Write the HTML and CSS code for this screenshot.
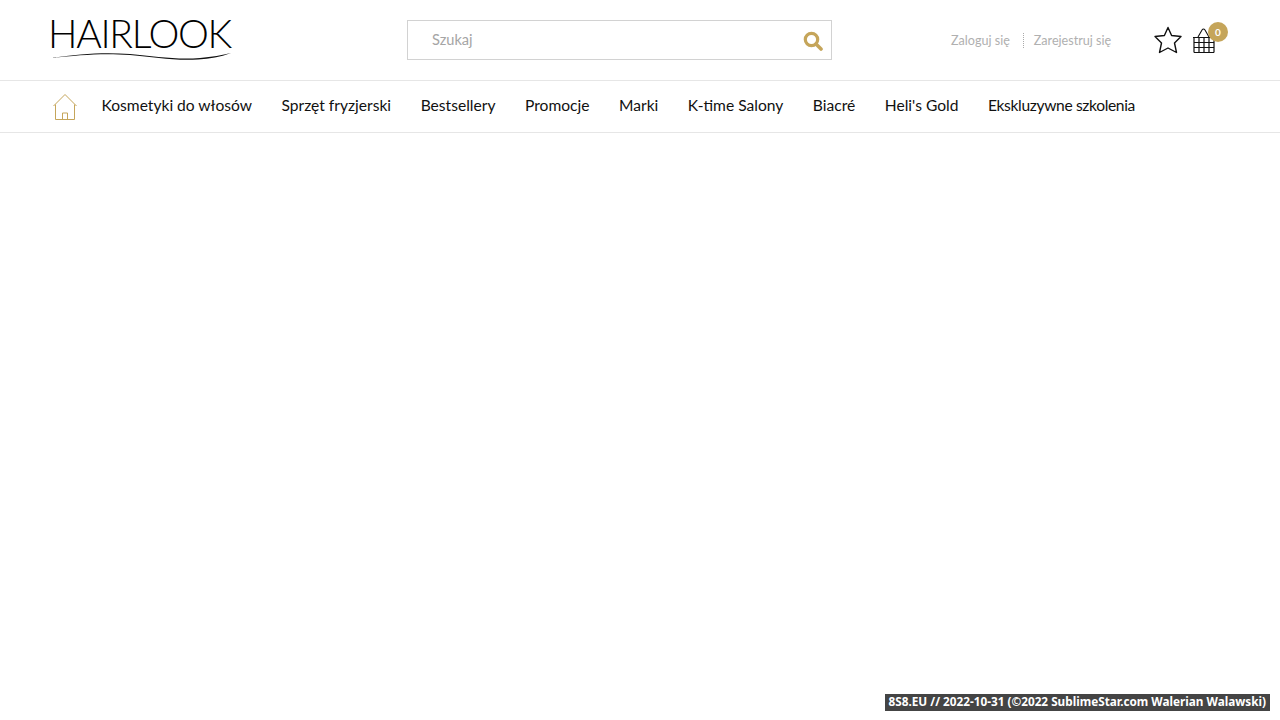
FILE: index.html
```html
<!DOCTYPE html>
<html lang="pl">
<head>
    <meta charset="UTF-8">
    <title>Hairlook</title>
    <link rel="stylesheet" href="styles.css">
</head>
<body>

    <header class="top">
        <a class="logo" href="#">
            <span class="logo-text">HAIRLOOK</span>
            <svg class="logo-wave" width="182" height="10" viewBox="0 0 182 10">
                <path d="M1 7 C30 3 52 1 80 3 C105 5 125 9 150 7 C162 6 172 4 181 2 C170 6 160 8 148 8.500 C124 10 104 6 80 4 C52 2 30 4 1 7 Z" fill="#111"/>
            </svg>
        </a>
        <form class="search">
            <input class="search-input" type="text" placeholder="Szukaj">
            <svg class="search-icon" width="20" height="20" viewBox="0 0 20 20">
                <circle cx="8.500" cy="8.500" r="6.200" fill="none" stroke="#c5a55a" stroke-width="3.200"/>
                <path d="M13 13 L18 18" stroke="#c5a55a" stroke-width="3.600" stroke-linecap="round"/>
            </svg>
        </form>
        <div class="account">
            <a href="#">Zaloguj się</a>
            <a class="register" href="#">Zarejestruj się</a>
        </div>
        <div class="shop-icons">
            <svg class="star" width="28" height="28" viewBox="0 0 28 28">
                <path d="M14 1.500 L17.600 9.500 L27 10.500 L20.500 17 L22.500 26.500 L14 22 L5.500 26.500 L7.500 17 L1 10.500 L10.400 9.500 Z" fill="none" stroke="#111" stroke-width="1.400" stroke-linejoin="round"/>
            </svg>
            <div class="basket">
                <svg width="24" height="26" viewBox="0 0 24 26">
                    <path d="M6 10 L10 3 Q11.500 1 13 3 L17 10" fill="none" stroke="#111" stroke-width="1.100"/>
                    <path d="M1 10.500 H23 M2 15.500 H22 M2 20.500 H22 M2 25.500 H22 M2 10.500 V25.500 M22 25.500 V10.500 M7 10.500 V25.500 M12 10.500 V25.500 M17 10.500 V25.500" fill="none" stroke="#111" stroke-width="1.200"/>
                </svg>
                <span class="badge">0</span>
            </div>
        </div>
    </header>

    <nav class="menu">
        <a class="home" href="#">
            <svg width="26" height="28" viewBox="0 0 26 28">
                <path d="M1.500 13 L13 1.500 L24.500 13 M3.500 11.500 V26.500 H22.500 V11.500 M10.500 26.500 V20 H15.500 V26.500" fill="none" stroke="#c5a55a" stroke-width="1"/>
            </svg>
        </a>
        <a href="#">Kosmetyki do włosów</a>
        <a href="#">Sprzęt fryzjerski</a>
        <a href="#">Bestsellery</a>
        <a href="#">Promocje</a>
        <a href="#">Marki</a>
        <a href="#">K-time Salony</a>
        <a href="#">Biacré</a>
        <a href="#">Heli's Gold</a>
        <a class="tight" href="#">Ekskluzywne szkolenia</a>
    </nav>

    <div class="stamp">8S8.EU // 2022-10-31 (©2022 SublimeStar.com Walerian Walawski)</div>

</body>
</html>
```
FILE: styles.css
```css
body {
    font-family: 'Lato', 'Noto Sans', sans-serif;
    background-color: #fff;
    color: #111;
    margin: 0;
    height: 720px;
    overflow: hidden;
}

a {
    color: inherit;
    text-decoration: none;
}

.top {
    display: flex;
    align-items: center;
    height: 80px;
    padding: 0 50px 0 46px;
    border-bottom: 1px solid #e6e6e6;
}

.logo {
    display: flex;
    flex-direction: column;
    width: 186px;
    margin-right: 175px;
    margin-top: -2px;
    color: #000;
}

.logo-text {
    font-family: 'Lato', sans-serif;
    font-weight: 300;
    font-size: 39px;
    line-height: 30px;
    letter-spacing: -1.300px;
    white-space: nowrap;
    padding-left: 2px;
}

.logo-wave {
    display: block;
    margin: 3px 0 0 4px;
}

.search {
    display: flex;
    align-items: center;
    width: 425px;
    height: 40px;
    box-sizing: border-box;
    border: 1px solid #d2d2d2;
    padding: 0 8px 0 24px;
}

.search-input {
    flex: 1;
    border: none;
    outline: none;
    font-family: inherit;
    font-size: 14.600px;
    color: #999;
    padding: 0;
    margin-bottom: 2px;
    background: none;
}

.search-input::placeholder {
    color: #a5a5a5;
}

.search-icon {
    margin-top: 2px;
}

.account {
    display: flex;
    align-items: center;
    margin-left: 119px;
    font-size: 12.600px;
    color: #b0b0b0;
}

.register {
    margin-left: 13px;
    padding-left: 10px;
    border-left: 1px dotted #aaa;
}

.shop-icons {
    display: flex;
    align-items: center;
    margin-left: auto;
}

.star {
    margin-right: 10px;
}

.basket {
    position: relative;
    width: 24px;
    height: 26px;
    margin-right: 14px;
}

.basket svg {
    display: block;
}

.badge {
    position: absolute;
    top: -5px;
    left: 16px;
    width: 20px;
    height: 20px;
    border-radius: 50%;
    background-color: #c5a55a;
    color: #fff;
    font-size: 10px;
    font-weight: bold;
    line-height: 20px;
    text-align: center;
}

.menu {
    display: flex;
    align-items: center;
    gap: 29.500px;
    height: 51px;
    padding-left: 52px;
    border-bottom: 1px solid #e6e6e6;
    font-size: 15.600px;
    white-space: nowrap;
}

.menu a {
    margin-top: -3px;
}

.menu .tight {
    letter-spacing: -0.350px;
}

.menu .home {
    display: block;
    height: 28px;
    width: 26px;
    margin-right: -6px;
    margin-top: 1px;
}

.stamp {
    position: absolute;
    right: 10px;
    bottom: 9px;
    height: 17px;
    padding: 0 4px;
    background-color: #444;
    color: #fff;
    font-family: 'Noto Sans', sans-serif;
    font-size: 11.750px;
    font-weight: bold;
    line-height: 15px;
    white-space: nowrap;
}
```
